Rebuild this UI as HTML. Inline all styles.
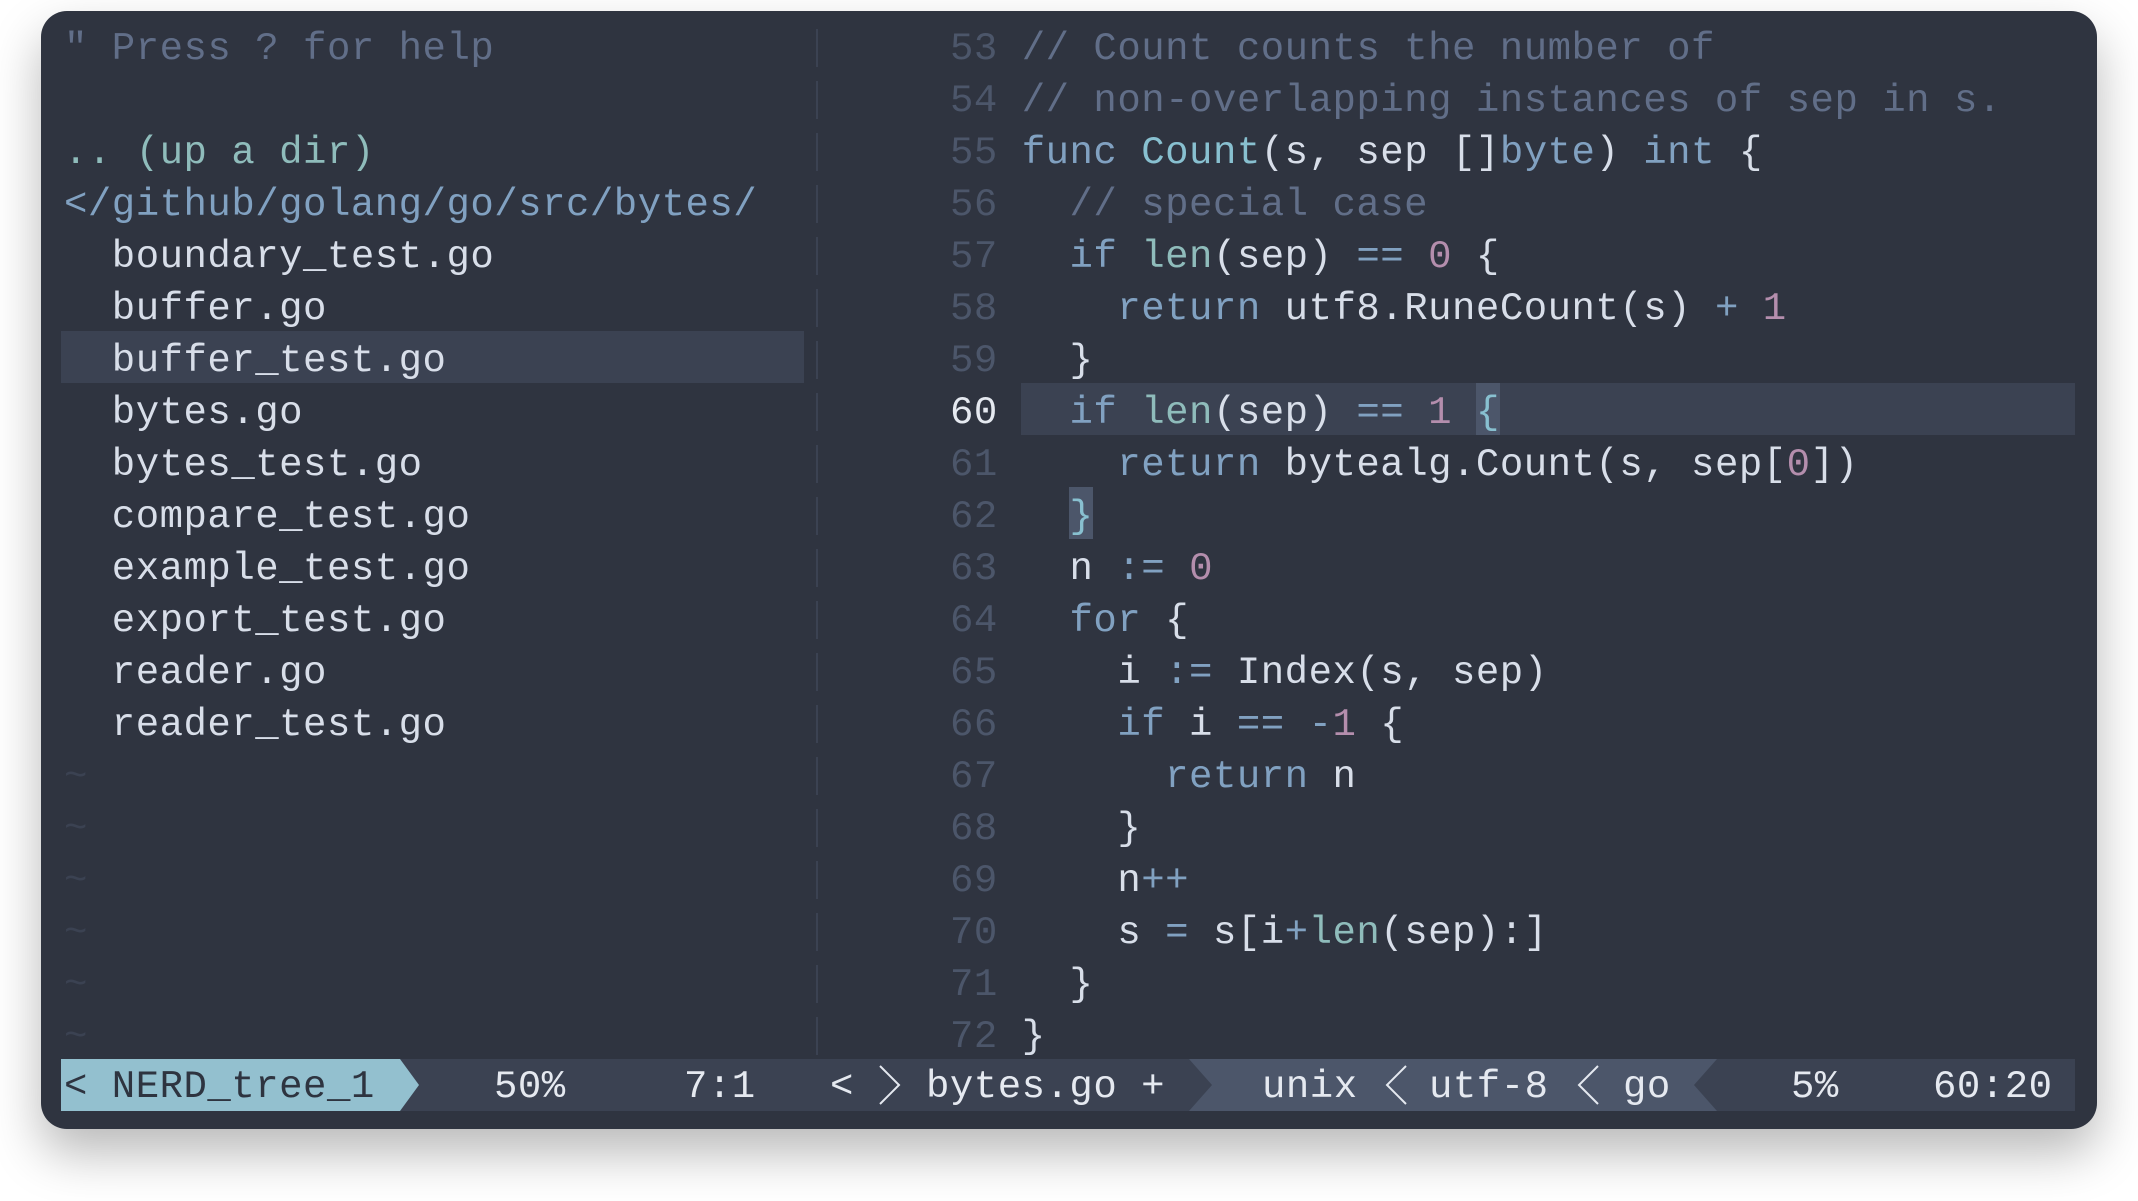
<!DOCTYPE html>
<html><head><meta charset="utf-8"><style>
body{margin:0;width:2138px;height:1201px;background:#fff;overflow:hidden;position:relative}
.win{position:absolute;left:41px;top:11px;width:2056px;height:1118px;background:#2f3440;border-radius:26px;box-shadow:0 24px 50px rgba(0,0,0,.28)}
pre{margin:0;position:absolute;font-family:"Liberation Mono",monospace;font-size:39px;letter-spacing:0.5px;line-height:54px;height:52px;white-space:pre;color:#d8dee9}
.c{color:#616e88}.k{color:#81a1c1}.f{color:#88c0d0}.b{color:#8fbcbb}.n{color:#b48ead}.ln{color:#4c566a}
.div{position:absolute;left:816px;width:2px;background:#3b4252;height:38px}
.hl{position:absolute;background:#3b4252}
</style></head><body>
<div class="win"></div>
<div class="hl" style="left:61px;top:331px;width:743px;height:52px"></div>
<div class="hl" style="left:1021px;top:383px;width:1054px;height:52px"></div>
<div style="position:absolute;left:1476px;top:383px;width:24px;height:52px;background:#4c566a"></div>
<div style="position:absolute;left:1069px;top:487px;width:24px;height:52px;background:#4c566a"></div>

<pre class="c" style="left:64px;top:22px">" Press ? for help</pre>
<pre class="b" style="left:64px;top:126px">.. (up a dir)</pre>
<pre class="k" style="left:64px;top:178px">&lt;/github/golang/go/src/bytes/</pre>
<pre style="left:64px;top:230px">  boundary_test.go</pre>
<pre style="left:64px;top:282px">  buffer.go</pre>
<pre style="left:64px;top:334px">  buffer_test.go</pre>
<pre style="left:64px;top:386px">  bytes.go</pre>
<pre style="left:64px;top:438px">  bytes_test.go</pre>
<pre style="left:64px;top:490px">  compare_test.go</pre>
<pre style="left:64px;top:542px">  example_test.go</pre>
<pre style="left:64px;top:594px">  export_test.go</pre>
<pre style="left:64px;top:646px">  reader.go</pre>
<pre style="left:64px;top:698px">  reader_test.go</pre>
<pre class="ln" style="left:64px;top:750px;color:#3b4252">~</pre>
<pre class="ln" style="left:64px;top:802px;color:#3b4252">~</pre>
<pre class="ln" style="left:64px;top:854px;color:#3b4252">~</pre>
<pre class="ln" style="left:64px;top:906px;color:#3b4252">~</pre>
<pre class="ln" style="left:64px;top:958px;color:#3b4252">~</pre>
<pre class="ln" style="left:64px;top:1010px;color:#3b4252">~</pre>

<div class="div" style="top:29px"></div><div class="div" style="top:81px"></div><div class="div" style="top:133px"></div><div class="div" style="top:185px"></div><div class="div" style="top:237px"></div><div class="div" style="top:289px"></div><div class="div" style="top:341px"></div><div class="div" style="top:393px"></div><div class="div" style="top:445px"></div><div class="div" style="top:497px"></div><div class="div" style="top:549px"></div><div class="div" style="top:601px"></div><div class="div" style="top:653px"></div><div class="div" style="top:705px"></div><div class="div" style="top:757px"></div><div class="div" style="top:809px"></div><div class="div" style="top:861px"></div><div class="div" style="top:913px"></div><div class="div" style="top:965px"></div><div class="div" style="top:1017px"></div>

<pre style="left:950px;top:22px"><span class="ln">53</span> <span class="c">// Count counts the number of</span></pre>
<pre style="left:950px;top:74px"><span class="ln">54</span> <span class="c">// non-overlapping instances of sep in s.</span></pre>
<pre style="left:950px;top:126px"><span class="ln">55</span> <span class="k">func</span> <span class="f">Count</span>(s, sep []<span class="k">byte</span>) <span class="k">int</span> {</pre>
<pre style="left:950px;top:178px"><span class="ln">56</span>   <span class="c">// special case</span></pre>
<pre style="left:950px;top:230px"><span class="ln">57</span>   <span class="k">if</span> <span class="b">len</span>(sep) <span class="k">==</span> <span class="n">0</span> {</pre>
<pre style="left:950px;top:282px"><span class="ln">58</span>     <span class="k">return</span> utf8.RuneCount(s) <span class="k">+</span> <span class="n">1</span></pre>
<pre style="left:950px;top:334px"><span class="ln">59</span>   }</pre>
<pre style="left:950px;top:386px"><span style="color:#e5e9f0">60</span>   <span class="k">if</span> <span class="b">len</span>(sep) <span class="k">==</span> <span class="n">1</span> <span class="f">{</span></pre>
<pre style="left:950px;top:438px"><span class="ln">61</span>     <span class="k">return</span> bytealg.Count(s, sep[<span class="n">0</span>])</pre>
<pre style="left:950px;top:490px"><span class="ln">62</span>   <span class="f">}</span></pre>
<pre style="left:950px;top:542px"><span class="ln">63</span>   n <span class="k">:=</span> <span class="n">0</span></pre>
<pre style="left:950px;top:594px"><span class="ln">64</span>   <span class="k">for</span> {</pre>
<pre style="left:950px;top:646px"><span class="ln">65</span>     i <span class="k">:=</span> Index(s, sep)</pre>
<pre style="left:950px;top:698px"><span class="ln">66</span>     <span class="k">if</span> i <span class="k">==</span> <span class="k">-</span><span class="n">1</span> {</pre>
<pre style="left:950px;top:750px"><span class="ln">67</span>       <span class="k">return</span> n</pre>
<pre style="left:950px;top:802px"><span class="ln">68</span>     }</pre>
<pre style="left:950px;top:854px"><span class="ln">69</span>     n<span class="k">++</span></pre>
<pre style="left:950px;top:906px"><span class="ln">70</span>     s <span class="k">=</span> s[i<span class="k">+</span><span class="b">len</span>(sep):]</pre>
<pre style="left:950px;top:958px"><span class="ln">71</span>   }</pre>
<pre style="left:950px;top:1010px"><span class="ln">72</span> }</pre>

<svg style="position:absolute;left:0;top:0" width="2138" height="1201">
<rect x="61" y="1059" width="2014" height="52" fill="#3b4252"/>
<polygon points="61,1059 400,1059 419,1085 400,1111 61,1111" fill="#93c0cf"/>
<polygon points="1189,1059 1717,1059 1694,1085 1717,1111 1189,1111 1212,1085" fill="#4c566a"/>
<polyline points="880,1066 899,1085 880,1104" fill="none" stroke="#e5e9f0" stroke-width="2"/>
<polyline points="1406,1066 1387,1085 1406,1104" fill="none" stroke="#e5e9f0" stroke-width="2"/>
<polyline points="1598,1066 1579,1085 1598,1104" fill="none" stroke="#e5e9f0" stroke-width="2"/>
</svg>
<pre style="left:64px;top:1060px;color:#2e3440">&lt; NERD_tree_1</pre>
<pre style="left:494px;top:1060px;color:#e5e9f0">50%</pre>
<pre style="left:684px;top:1060px;color:#e5e9f0">7:1</pre>
<pre style="left:830px;top:1060px;color:#e5e9f0">&lt;</pre>
<pre style="left:926px;top:1060px;color:#e5e9f0">bytes.go +</pre>
<pre style="left:1262px;top:1060px;color:#e5e9f0">unix</pre>
<pre style="left:1429px;top:1060px;color:#e5e9f0">utf-8</pre>
<pre style="left:1623px;top:1060px;color:#e5e9f0">go</pre>
<pre style="left:1791px;top:1060px;color:#e5e9f0">5%</pre>
<pre style="left:1933px;top:1060px;color:#e5e9f0">60:20</pre>
</body></html>
